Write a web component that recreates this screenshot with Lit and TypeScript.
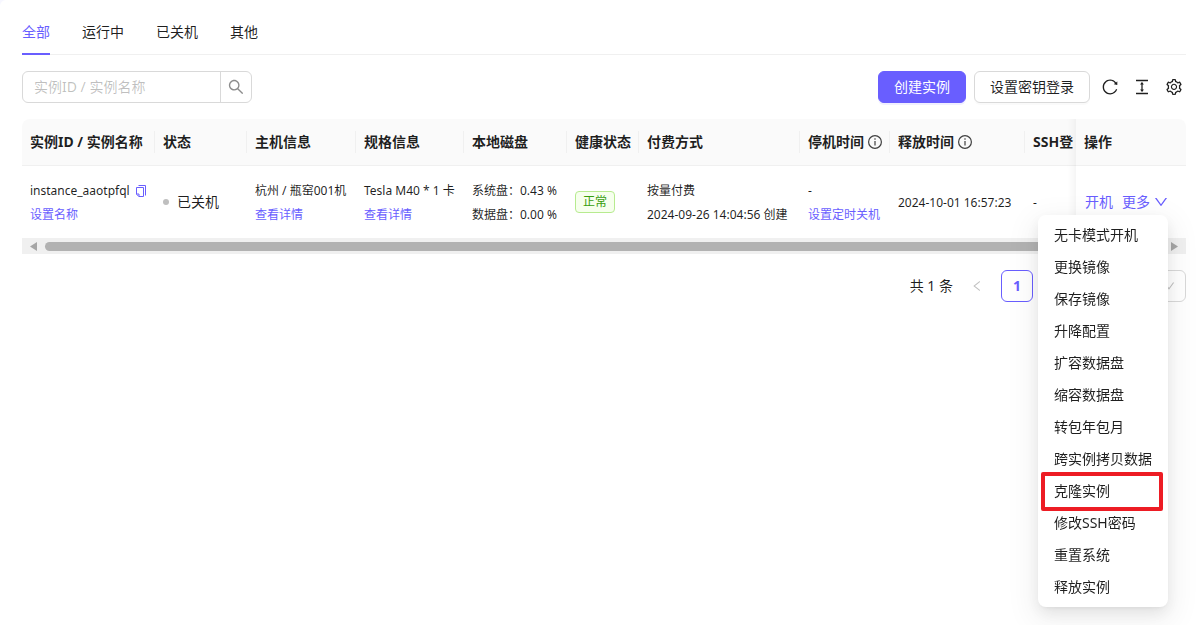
import { LitElement, html, css, svg } from "lit";
import { customElement, state } from "lit/decorators.js";
import { classMap } from "lit/directives/class-map.js";

const PATHS = {
  search:
    "M909.6 854.5L649.9 594.8C690.2 542.7 712 479 712 412c0-80.2-31.3-155.4-87.9-212.1-56.6-56.7-132-87.9-212.1-87.9s-155.5 31.3-212.1 87.9C143.2 256.5 112 331.8 112 412c0 80.1 31.3 155.5 87.9 212.1C256.5 680.8 331.8 712 412 712c67 0 130.6-21.8 182.7-62l259.7 259.6a8.2 8.2 0 0011.6 0l43.6-43.5a8.2 8.2 0 000-11.6zM570.4 570.4C528 612.7 471.8 636 412 636s-116-23.3-158.4-65.6C211.3 528 188 471.8 188 412s23.3-116.1 65.6-158.4C296 211.3 352.2 188 412 188s116.1 23.2 158.4 65.6S636 352.2 636 412s-23.3 116.1-65.6 158.4z",
  reload:
    "M909.1 209.3l-56.4 44.1C775.8 155.1 656.2 92 521.9 92 290 92 102.3 279.5 102 511.5 101.7 743.7 289.8 932 521.9 932c181.3 0 335.8-115 394.6-276.1 1.5-4.2-.7-8.9-4.9-10.3l-56.7-19.5a8 8 0 00-10.1 4.8c-1.8 5-3.8 10-5.9 14.9-17.3 41-42.1 77.8-73.7 109.4A344.77 344.77 0 01655.9 829c-42.3 17.9-87.4 27-133.8 27-46.5 0-91.5-9.1-133.8-27A341.5 341.5 0 01279 755.2a342.16 342.16 0 01-73.7-109.4c-17.9-42.4-27-87.4-27-133.9s9.1-91.5 27-133.9c17.3-41 42.1-77.8 73.7-109.4 31.6-31.6 68.4-56.4 109.3-73.8 42.3-17.9 87.4-27 133.8-27 46.5 0 91.5 9.1 133.8 27a341.5 341.5 0 01109.3 73.8c9.9 9.9 19.2 20.4 27.8 31.4l-60.2 47a8 8 0 003 14.1l175.6 43c5 1.2 9.9-2.6 9.9-7.7l.8-180.9c-.1-6.6-7.8-10.3-13-6.2z",
  density:
    "M840 836H184c-4.4 0-8 3.6-8 8v60c0 4.4 3.6 8 8 8h656c4.4 0 8-3.6 8-8v-60c0-4.4-3.6-8-8-8zm0-724H184c-4.4 0-8 3.6-8 8v60c0 4.4 3.6 8 8 8h656c4.4 0 8-3.6 8-8v-60c0-4.4-3.6-8-8-8zM610.8 378c6 0 9.4-7 5.7-11.7L515.7 238.7a7.14 7.14 0 00-11.3 0L403.6 366.3a7.23 7.23 0 005.7 11.7H476v268h-62.8c-6 0-9.4 7-5.7 11.7l100.8 127.5c2.9 3.7 8.5 3.7 11.3 0l100.8-127.5c3.7-4.7.4-11.7-5.7-11.7H548V378h62.8z",
  setting:
    "M924.8 625.7l-65.5-56c3.1-19 4.7-38.4 4.7-57.8s-1.6-38.8-4.7-57.8l65.5-56a32.03 32.03 0 009.3-35.2l-.9-2.6a443.74 443.74 0 00-79.7-137.9l-1.8-2.1a32.12 32.12 0 00-35.1-9.5l-81.3 28.9c-30-24.6-63.5-44-99.7-57.6l-15.7-85a32.05 32.05 0 00-25.8-25.7l-2.7-.5c-52.1-9.4-106.9-9.4-159 0l-2.7.5a32.05 32.05 0 00-25.8 25.7l-15.8 85.4a351.86 351.86 0 00-99 57.4l-81.9-29.1a32 32 0 00-35.1 9.5l-1.8 2.1a446.02 446.02 0 00-79.7 137.9l-.9 2.6c-4.5 12.5-.8 26.5 9.3 35.2l66.3 56.6c-3.1 18.8-4.6 38-4.6 57.1 0 19.2 1.5 38.4 4.6 57.1L99 625.5a32.03 32.03 0 00-9.3 35.2l.9 2.6c18.1 50.4 44.9 96.9 79.7 137.9l1.8 2.1a32.12 32.12 0 0035.1 9.5l81.9-29.1c29.8 24.5 63.1 43.9 99 57.4l15.8 85.4a32.05 32.05 0 0025.8 25.7l2.7.5a449.4 449.4 0 00159 0l2.7-.5a32.05 32.05 0 0025.8-25.7l15.7-85a350 350 0 0099.7-57.6l81.3 28.9a32 32 0 0035.1-9.5l1.8-2.1c34.8-41.1 61.6-87.5 79.7-137.9l.9-2.6c4.5-12.3.8-26.3-9.3-35zM788.3 465.9c2.5 15.1 3.8 30.6 3.8 46.1s-1.3 31-3.8 46.1l-6.6 40.1 74.7 63.9a370.03 370.03 0 01-42.6 73.6L721 702.8l-31.4 25.8c-23.9 19.6-50.5 35-79.3 45.8l-38.1 14.3-17.9 97a377.5 377.5 0 01-85 0l-17.9-97.2-37.8-14.5c-28.5-10.8-55-26.2-78.7-45.7l-31.4-25.9-93.4 33.2c-17-22.9-31.2-47.6-42.6-73.6l75.5-64.5-6.5-40c-2.4-14.9-3.7-30.3-3.7-45.5 0-15.3 1.2-30.6 3.7-45.5l6.5-40-75.5-64.5c11.3-26.1 25.6-50.7 42.6-73.6l93.4 33.2 31.4-25.9c23.7-19.5 50.2-34.9 78.7-45.7l37.9-14.3 17.9-97.2c28.1-3.2 56.8-3.2 85 0l17.9 97 38.1 14.3c28.7 10.8 55.4 26.2 79.3 45.8l31.4 25.8 92.8-32.9c17 22.9 31.2 47.6 42.6 73.6L781.8 426l6.5 39.9zM512 326c-97.2 0-176 78.8-176 176s78.8 176 176 176 176-78.8 176-176-78.8-176-176-176zm79.2 255.2A111.6 111.6 0 01512 614c-29.9 0-58-11.7-79.2-32.8A111.6 111.6 0 01400 502c0-29.9 11.7-58 32.8-79.2C454 401.6 482.1 390 512 390c29.9 0 58 11.6 79.2 32.8A111.6 111.6 0 01624 502c0 29.9-11.7 58-32.8 79.2z",
  down: "M884 256h-75c-5.1 0-9.9 2.5-12.9 6.6L512 654.2 227.9 262.6c-3-4.1-7.8-6.6-12.9-6.6h-75c-6.5 0-10.3 7.4-6.5 12.7l352.6 486.1c12.8 17.6 39 17.6 51.7 0l352.6-486.1c3.9-5.3.1-12.7-6.4-12.7z",
  left: "M724 218.3V141c0-6.7-7.7-10.4-12.9-6.3L260.3 486.8a31.86 31.86 0 000 50.3l450.8 352.1c5.3 4.1 12.9.4 12.9-6.3v-77.3c0-4.9-2.3-9.6-6.1-12.6l-360-281 360-281.1c3.8-3 6.1-7.7 6.1-12.6z",
  right:
    "M765.7 486.8L314.9 134.7A7.97 7.97 0 00302 141v77.3c0 4.9 2.3 9.6 6.1 12.6l360 281.1-360 281.1c-3.9 3-6.1 7.7-6.1 12.6V883c0 6.7 7.7 10.4 12.9 6.3l450.8-352.1a31.96 31.96 0 000-50.4z",
};

const icon = (name: keyof typeof PATHS, size = 16) => html`<svg
  width=${size}
  height=${size}
  viewBox="64 64 896 896"
  fill="currentColor"
  aria-hidden="true"
>
  ${svg`<path d=${PATHS[name]}></path>`}
</svg>`;

const infoIcon = html`<svg width="14" height="14" viewBox="0 0 14 14" fill="none" stroke="currentColor" aria-hidden="true">
  <circle cx="7" cy="7" r="6.4" stroke-width="1.2"></circle>
  <path d="M7 6v4.5" stroke-width="1.2"></path>
  <circle cx="7" cy="4" r="0.8" fill="currentColor" stroke="none"></circle>
</svg>`;

const copyIcon = html`<svg width="12" height="12" viewBox="0 0 12 12" fill="none" stroke="currentColor" aria-hidden="true">
  <path d="M3.5 0.5H10.5V10.5" stroke-width="1"></path>
  <path d="M1.5 2.5H8.5V11.5H3.8L1.5 9.2Z" stroke-width="1"></path>
  <path d="M1.5 9H4V11.5" stroke-width="1"></path>
</svg>`;

const TABS = ["全部", "运行中", "已关机", "其他"];

const COLUMNS: { title: string; cls: string; info?: boolean }[] = [
  { title: "实例ID / 实例名称", cls: "c-id" },
  { title: "状态", cls: "c-status" },
  { title: "主机信息", cls: "c-host" },
  { title: "规格信息", cls: "c-spec" },
  { title: "本地磁盘", cls: "c-disk" },
  { title: "健康状态", cls: "c-health" },
  { title: "付费方式", cls: "c-pay" },
  { title: "停机时间", cls: "c-stop", info: true },
  { title: "释放时间", cls: "c-release", info: true },
  { title: "SSH登", cls: "c-ssh" },
  { title: "操作", cls: "c-action" },
];

const ACTIONS = [
  "无卡模式开机",
  "更换镜像",
  "保存镜像",
  "升降配置",
  "扩容数据盘",
  "缩容数据盘",
  "转包年包月",
  "跨实例拷贝数据",
  "克隆实例",
  "修改SSH密码",
  "重置系统",
  "释放实例",
];

@customElement("app-root")
export class AppRoot extends LitElement {
  @state() private tab = 0;
  @state() private menuOpen = true;

  static styles = css`
    :host {
      --primary: #695eff;
      --text: rgba(0, 0, 0, 0.88);
      --line: #f0f0f0;
      --border: #d9d9d9;
      display: block;
      min-height: 100vh;
      background: #f7f7ff;
      color: var(--text);
      font: 14px/22px "Noto Sans", "Noto Sans CJK SC", sans-serif;
    }
    * {
      box-sizing: border-box;
    }
    svg {
      display: block;
      flex: none;
    }
    button,
    input,
    select {
      font: inherit;
      color: inherit;
      margin: 0;
    }
    button {
      border: 0;
      padding: 0;
      background: none;
      cursor: pointer;
    }
    a {
      color: var(--primary);
      text-decoration: none;
    }
    .page {
      min-height: 100vh;
      padding: 9px 11px 16px 22px;
      background: #fff;
      border-top-left-radius: 6px;
      display: flex;
      flex-direction: column;
      gap: 16px;
    }
    .tabs {
      display: flex;
      gap: 32px;
      border-bottom: 1px solid var(--line);
    }
    .tab {
      padding: 12px 0 10px;
      margin-bottom: -1px;
      border-bottom: 2px solid transparent;
    }
    .tab.on {
      color: var(--primary);
      border-color: var(--primary);
    }
    .toolbar {
      display: flex;
      align-items: center;
      justify-content: space-between;
    }
    .search {
      display: flex;
      width: 230px;
      height: 32px;
      border: 1px solid var(--border);
      border-radius: 6px;
      overflow: hidden;
    }
    .search input {
      flex: 1;
      min-width: 0;
      border: 0;
      outline: 0;
      padding: 0 11px;
      background: none;
    }
    .search input::placeholder {
      color: rgba(0, 0, 0, 0.25);
    }
    .search button {
      width: 31px;
      display: grid;
      place-items: center;
      border-left: 1px solid var(--border);
      color: rgba(0, 0, 0, 0.45);
    }
    .tools {
      display: flex;
      align-items: center;
      gap: 8px;
    }
    .btn {
      height: 32px;
      padding: 0 15px;
      border: 1px solid var(--border);
      border-radius: 6px;
      background: #fff;
      box-shadow: 0 2px 0 rgba(0, 0, 0, 0.02);
    }
    .btn.primary {
      border-color: var(--primary);
      background: var(--primary);
      color: #fff;
      box-shadow: 0 2px 0 rgba(105, 94, 255, 0.1);
    }
    .icons {
      display: flex;
      gap: 16px;
      padding: 0 4px;
    }
    .table-area {
      position: relative;
    }
    .scroller {
      overflow: hidden;
      border-radius: 8px 8px 0 0;
    }
    table {
      table-layout: fixed;
      width: 1245px;
      min-width: 100%;
      border-collapse: separate;
      border-spacing: 0;
    }
    .c-id {
      width: 133px;
    }
    .c-status {
      width: 92px;
    }
    .c-host {
      width: 109px;
    }
    .c-spec {
      width: 108px;
    }
    .c-disk {
      width: 103px;
    }
    .c-health {
      width: 72px;
    }
    .c-pay {
      width: 161px;
    }
    .c-stop {
      width: 90px;
    }
    .c-release {
      width: 135px;
    }
    .c-ssh {
      width: 132px;
    }
    .c-action {
      width: 110px;
    }
    th {
      height: 47px;
      padding: 0;
      background: #fafafa;
      border-bottom: 1px solid var(--line);
      font-weight: 700;
      text-align: left;
      white-space: nowrap;
    }
    .head {
      display: flex;
      align-items: center;
      gap: 4px;
      padding: 0 8px;
      border-right: 1px solid var(--line);
    }
    .c-action .head,
    .c-ssh .head {
      border-right-color: transparent;
    }
    .head svg {
      color: rgba(0, 0, 0, 0.75);
    }
    td {
      height: 72px;
      padding: 0 8px;
      background: #fff;
      font-size: 12px;
      line-height: 24px;
      white-space: nowrap;
    }
    .text {
      padding-top: 2px;
    }
    .c-action {
      position: sticky;
      right: 0;
      z-index: 1;
    }
    .c-action::before {
      content: "";
      position: absolute;
      top: 0;
      bottom: -1px;
      left: -30px;
      width: 30px;
      box-shadow: inset -10px 0 8px -8px rgba(5, 5, 5, 0.06);
      pointer-events: none;
    }
    .with-icon,
    .status,
    .ops,
    .more {
      display: flex;
      align-items: center;
    }
    .with-icon {
      gap: 5px;
    }
    .with-icon button,
    .more {
      color: var(--primary);
    }
    .status {
      gap: 8px;
      font-size: 14px;
    }
    .dot {
      width: 6px;
      height: 6px;
      border-radius: 50%;
      background: #bfbfbf;
    }
    .tag {
      display: block;
      width: fit-content;
      padding: 0 7px;
      border: 1px solid #b7eb8f;
      border-radius: 4px;
      background: #f6ffed;
      color: #389e0d;
      line-height: 20px;
    }
    .ops {
      gap: 9px;
      padding-left: 1px;
      font-size: 14px;
    }
    .more {
      gap: 4px;
    }
    .bar {
      display: flex;
      align-items: center;
      gap: 8px;
      height: 16px;
      padding: 0 8px;
      background: #f0f0f0;
      color: #a6a6a6;
    }
    .thumb {
      flex: 1;
      margin-right: 58px;
      height: 9px;
      border-radius: 5px;
      background: #b2b2b2;
    }
    .menu {
      position: absolute;
      z-index: 5;
      top: 96px;
      right: 18px;
      margin: 0;
      padding: 4px;
      list-style: none;
      border-radius: 8px;
      background: #fff;
      box-shadow:
        0 6px 16px rgba(0, 0, 0, 0.08),
        0 3px 6px -4px rgba(0, 0, 0, 0.12),
        0 9px 28px 8px rgba(0, 0, 0, 0.05);
    }
    .menu li {
      position: relative;
    }
    .menu button {
      width: 100%;
      height: 32px;
      padding: 0 12px;
      text-align: left;
      white-space: nowrap;
    }
    .menu .marked::after {
      content: "";
      position: absolute;
      inset: -3px 1px -4px -1px;
      border: 4px solid #ed1c24;
      border-radius: 2px;
      pointer-events: none;
    }
    .pager {
      display: flex;
      align-items: center;
      justify-content: flex-end;
      gap: 8px;
    }
    .pager button {
      display: grid;
      place-items: center;
      width: 32px;
      height: 32px;
      border-radius: 6px;
    }
    .pager button:disabled {
      color: rgba(0, 0, 0, 0.25);
    }
    .pager .current {
      border: 1px solid var(--primary);
      color: var(--primary);
      font-weight: 700;
    }
    .size {
      display: grid;
      align-items: center;
      margin-left: 8px;
    }
    .size select {
      grid-area: 1 / 1;
      width: 97px;
      height: 32px;
      padding: 0 11px;
      border: 1px solid var(--border);
      border-radius: 6px;
      background: #fff;
      appearance: none;
    }
    .size svg {
      grid-area: 1 / 1;
      justify-self: end;
      margin-right: 11px;
      color: rgba(0, 0, 0, 0.25);
      pointer-events: none;
    }
  `;

  private renderRow() {
    return html`<tr>
      <td class="text">
        <div class="with-icon">
          <span>instance_aaotpfql</span>
          <button aria-label="复制">${copyIcon}</button>
        </div>
        <a href="#">设置名称</a>
      </td>
      <td>
        <div class="status"><span class="dot"></span>已关机</div>
      </td>
      <td class="text">
        <div>杭州 / 瓶窑001机</div>
        <a href="#">查看详情</a>
      </td>
      <td class="text">
        <div>Tesla M40 * 1 卡</div>
        <a href="#">查看详情</a>
      </td>
      <td class="text">
        <div>系统盘：0.43 %</div>
        <div>数据盘：0.00 %</div>
      </td>
      <td><span class="tag">正常</span></td>
      <td class="text">
        <div>按量付费</div>
        <div>2024-09-26 14:04:56 创建</div>
      </td>
      <td class="text">
        <div>-</div>
        <a href="#">设置定时关机</a>
      </td>
      <td class="text">2024-10-01 16:57:23</td>
      <td class="text">-</td>
      <td class="c-action">
        <div class="ops">
          <a href="#">开机</a>
          <button class="more" aria-expanded=${this.menuOpen} @click=${() => (this.menuOpen = !this.menuOpen)}>
            更多 ${icon("down", 14)}
          </button>
        </div>
      </td>
    </tr>`;
  }

  render() {
    return html`<main class="page">
      <nav class="tabs" role="tablist">
        ${TABS.map(
          (name, i) => html`<button
            role="tab"
            aria-selected=${i === this.tab}
            class=${classMap({ tab: true, on: i === this.tab })}
            @click=${() => (this.tab = i)}
          >
            ${name}
          </button>`,
        )}
      </nav>

      <div class="toolbar">
        <form class="search" @submit=${(e: Event) => e.preventDefault()}>
          <input type="text" aria-label="实例ID / 实例名称" placeholder="实例ID / 实例名称" />
          <button aria-label="搜索">${icon("search")}</button>
        </form>
        <div class="tools">
          <button class="btn primary">创建实例</button>
          <button class="btn">设置密钥登录</button>
          <div class="icons">
            <button aria-label="刷新">${icon("reload")}</button>
            <button aria-label="密度">${icon("density")}</button>
            <button aria-label="列设置">${icon("setting")}</button>
          </div>
        </div>
      </div>

      <section class="table-area">
        <div class="scroller">
          <table>
            <thead>
              <tr>
                ${COLUMNS.map(
                  (c) => html`<th class=${c.cls} scope="col">
                    <div class="head">${c.title}${c.info ? infoIcon : ""}</div>
                  </th>`,
                )}
              </tr>
            </thead>
            <tbody>
              ${this.renderRow()}
            </tbody>
          </table>
        </div>
        <div class="bar" aria-hidden="true">
          <svg width="7" height="9" viewBox="0 0 7 9" fill="currentColor"><path d="M7 0v9L0 4.500z"></path></svg>
          <div class="thumb"></div>
          <svg width="7" height="9" viewBox="0 0 7 9" fill="currentColor"><path d="M0 0v9L7 4.500z"></path></svg>
        </div>
        ${this.menuOpen
          ? html`<ul class="menu">
              ${ACTIONS.map(
                (a) => html`<li class=${classMap({ marked: a === "克隆实例" })}><button>${a}</button></li>`,
              )}
            </ul>`
          : ""}
      </section>

      <div class="pager">
        <span>共 1 条</span>
        <button disabled aria-label="上一页">${icon("left", 12)}</button>
        <button class="current">1</button>
        <button disabled aria-label="下一页">${icon("right", 12)}</button>
        <div class="size">
          <select aria-label="每页条数">
            <option>10 条/页</option>
          </select>
          ${icon("down", 12)}
        </div>
      </div>
    </main>`;
  }
}
